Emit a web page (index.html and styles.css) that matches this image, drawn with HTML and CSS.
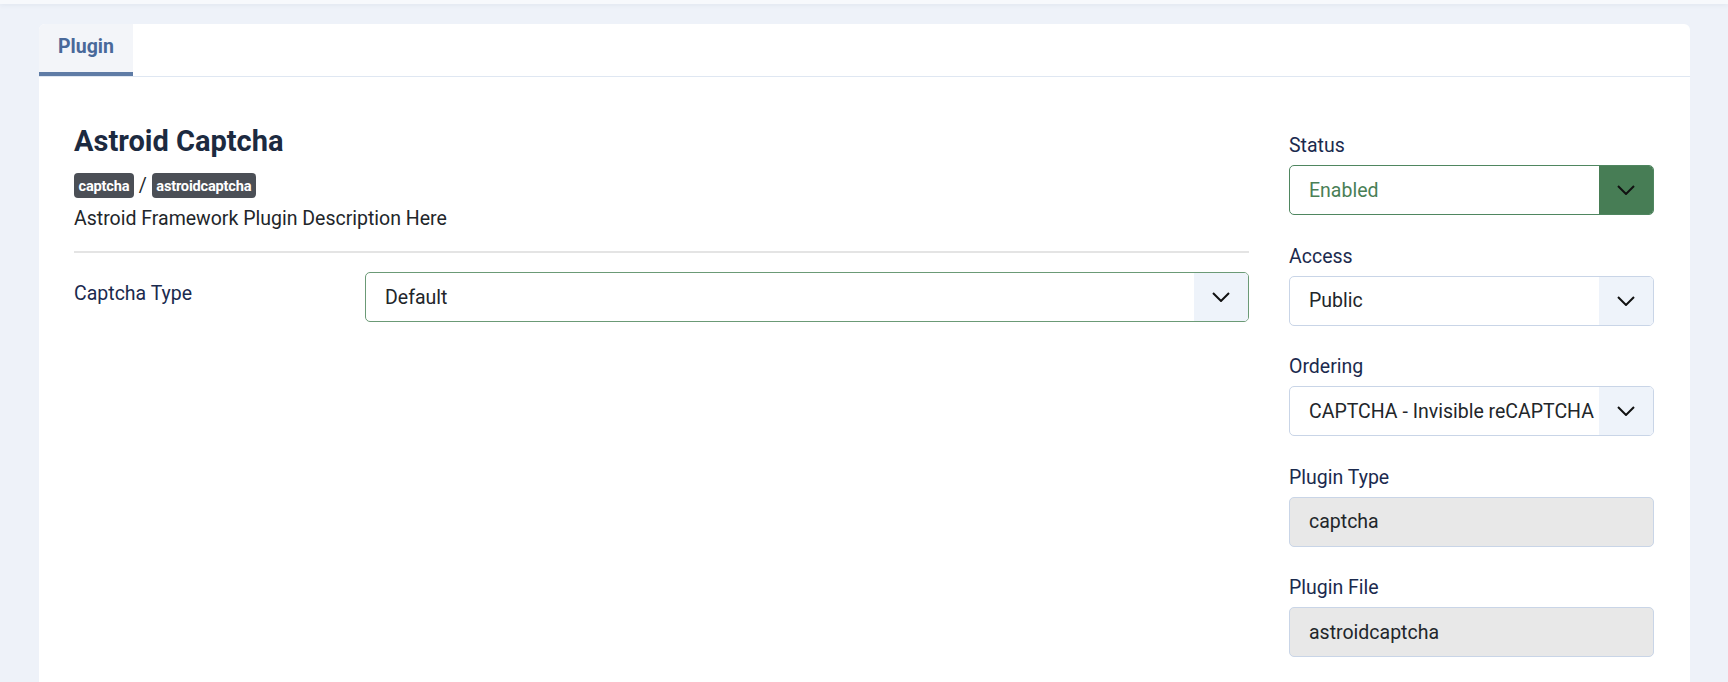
FILE: index.html
```html
<!DOCTYPE html>
<html lang="en">
<head>
<meta charset="utf-8">
<title>Plugin: Astroid Captcha</title>
<link rel="stylesheet" href="styles.css">
</head>
<body>
<div class="topbar"></div>
<main class="page">
  <section class="card">
    <nav class="tabs">
      <div class="tab active">Plugin</div>
    </nav>
    <div class="card-body">
      <div class="main-col">
        <h1 class="title">Astroid Captcha</h1>
        <div class="badges">
          <span class="badge">captcha</span>
          <span class="sep">/</span>
          <span class="badge">astroidcaptcha</span>
        </div>
        <p class="desc">Astroid Framework Plugin Description Here</p>
        <hr class="divider">
        <div class="form-row">
          <label class="row-label">Captcha Type</label>
          <div class="select select-valid">
            <span class="select-value">Default</span>
            <span class="select-arrow"><svg width="18" height="10" viewBox="0 0 18 10"><polyline points="1,1 9,9 17,1" fill="none" stroke="#111" stroke-width="2"/></svg></span>
          </div>
        </div>
      </div>
      <aside class="side-col">
        <div class="field">
          <label class="field-label">Status</label>
          <div class="select select-success">
            <span class="select-value">Enabled</span>
            <span class="select-arrow"><svg width="18" height="10" viewBox="0 0 18 10"><polyline points="1,1 9,9 17,1" fill="none" stroke="#111" stroke-width="2"/></svg></span>
          </div>
        </div>
        <div class="field">
          <label class="field-label">Access</label>
          <div class="select">
            <span class="select-value">Public</span>
            <span class="select-arrow"><svg width="18" height="10" viewBox="0 0 18 10"><polyline points="1,1 9,9 17,1" fill="none" stroke="#111" stroke-width="2"/></svg></span>
          </div>
        </div>
        <div class="field">
          <label class="field-label">Ordering</label>
          <div class="select">
            <span class="select-value">CAPTCHA - Invisible reCAPTCHA</span>
            <span class="select-arrow"><svg width="18" height="10" viewBox="0 0 18 10"><polyline points="1,1 9,9 17,1" fill="none" stroke="#111" stroke-width="2"/></svg></span>
          </div>
        </div>
        <div class="field">
          <label class="field-label">Plugin Type</label>
          <div class="input readonly">captcha</div>
        </div>
        <div class="field">
          <label class="field-label">Plugin File</label>
          <div class="input readonly">astroidcaptcha</div>
        </div>
      </aside>
    </div>
  </section>
</main>
</body>
</html>
```

FILE: styles.css
```css
* { box-sizing: border-box; }

html, body {
  margin: 0;
  padding: 0;
}

body {
  background: #eef2f9;
  font-family: Roboto, "Noto Sans", "Liberation Sans", sans-serif;
  color: #22262a;
  overflow: hidden;
  height: 682px;
}

.topbar {
  height: 4px;
  background: #f7f9fc;
  box-shadow: 0 1px 5px rgba(30, 50, 90, 0.07);
}

.page {
  padding: 20px 38px 0 39px;
}

.card {
  background: #fff;
  border-radius: 6px;
}

.tabs {
  display: flex;
  border-bottom: 1px solid #dfe7f2;
}

.tab {
  width: 94px;
  height: 52px;
  display: flex;
  align-items: center;
  justify-content: center;
  padding-bottom: 3px;
  font-size: 19.5px;
  font-weight: 700;
  color: #49699a;
  background: #f3f5f9;
  border-bottom: 4px solid #5f7ca6;
  border-top-left-radius: 6px;
}

.card-body {
  display: grid;
  grid-template-columns: 1175px 365px;
  column-gap: 40px;
  padding: 47px 36px 40px 35px;
}

.title {
  margin: 0;
  font-size: 29px;
  line-height: 34px;
  font-weight: 700;
  color: #1c2a40;
}

.badges {
  display: flex;
  align-items: center;
  gap: 5px;
  margin-top: 15px;
  height: 25px;
}

.badge {
  display: inline-block;
  background: #4b4f56;
  color: #fff;
  font-size: 14.6px;
  font-weight: 700;
  line-height: 16px;
  padding: 4.5px 4.5px;
  border-radius: 4px;
  letter-spacing: -0.2px;
}

.sep {
  font-size: 19.5px;
  line-height: 22px;
  color: #22262a;
}

.desc {
  margin: 7px 0 0;
  font-size: 19.5px;
  line-height: 27px;
  color: #22262a;
}

.divider {
  margin: 19px 0 19px;
  border: 0;
  border-top: 2px solid #e4e4e4;
}

.form-row {
  display: grid;
  grid-template-columns: 291px 1fr;
}

.row-label {
  padding-top: 8px;
  font-size: 19.5px;
  line-height: 27px;
  color: #1b2a4e;
}

.side-col {
  padding-top: 8px;
}

.field {
  margin-bottom: 27.5px;
}

.field-label {
  display: block;
  font-size: 19.5px;
  line-height: 27px;
  color: #1b2a4e;
  margin-bottom: 6px;
}

.select {
  display: flex;
  height: 50px;
  border: 1px solid #c9d5e7;
  border-radius: 5px;
  overflow: hidden;
  background: #fff;
}

.select-value {
  flex: 1;
  display: flex;
  align-items: center;
  padding-left: 19px;
  font-size: 19.5px;
  color: #22262a;
  white-space: nowrap;
  overflow: hidden;
}

.select-arrow {
  width: 54px;
  flex: none;
  display: flex;
  align-items: center;
  justify-content: center;
  background: #eef3fa;
}

.select-valid {
  border-color: #6b9a76;
}

.select-success {
  border-color: #4f8660;
}

.select-success .select-value {
  color: #4a7f56;
}

.select-success .select-arrow {
  background: #477d55;
}

.input {
  height: 50px;
  display: flex;
  align-items: center;
  padding-left: 19px;
  font-size: 19.5px;
  color: #22262a;
  border: 1px solid #c9d5e7;
  border-radius: 5px;
}

.readonly {
  background: #e8e8e8;
}
```
